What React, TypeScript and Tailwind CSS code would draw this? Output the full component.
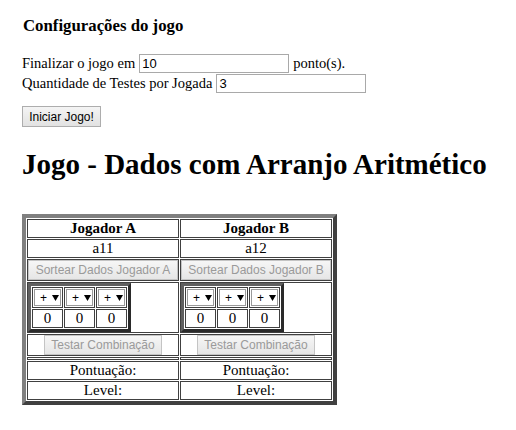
import React from "react";

const serif = "[font-family:'Liberation_Serif','Times_New_Roman',serif]";
const sans = "[font-family:'Liberation_Sans',Arial,sans-serif]";

const cell = "border border-[#404040] p-0 text-center align-middle text-[15px] leading-[17px]";

const Arrow = () => (
  <svg width="7" height="6" viewBox="0 0 7 6" className="ml-[5px]">
    <path d="M0 0 H7 L3.5 6 Z" fill="#000" />
  </svg>
);

const Dice = () => (
  <table className="border-separate border-spacing-[1px] border-[3px] border-t-[#606060] border-l-[#606060] border-r-[#2a2a2a] border-b-[#2a2a2a]">
    <tbody>
      <tr>
        {[0, 1, 2].map((i) => (
          <td key={i} className={`${cell} w-[31px] py-px`}>
            <div className={`${sans} mx-auto flex h-[17px] w-[27px] items-center border border-[#9a9a9a] bg-white pl-[5px] text-[12px] leading-none`}>
              +<Arrow />
            </div>
          </td>
        ))}
      </tr>
      <tr>
        {[0, 1, 2].map((i) => (
          <td key={i} className={`${cell} w-[31px]`}>0</td>
        ))}
      </tr>
    </tbody>
  </table>
);

const disabledBtn = `${sans} h-[20px] border border-[#c4c4c4] bg-gradient-to-b from-[#f6f6f6] to-[#e6e6e6] text-[12px] text-[#9a9a9a]`;

export default function App() {
  return (
    <div className={`${serif} min-h-[430px] bg-white px-[22px] pt-[17px] text-[14.5px] leading-[18px] text-black`}>
      <h3 className="pl-px text-[16.8px] font-bold">Configurações do jogo</h3>

      <div className="mt-[18px] flex h-[20px] items-center">
        <span>Finalizar o jogo em</span>
        <input
          readOnly
          value="10"
          className={`${sans} ml-[4px] h-[19px] w-[150px] border border-[#a9a9a9] px-[2px] text-[13px] outline-none`}
        />
        <span className="ml-[4px]">ponto(s).</span>
      </div>
      <div className="flex h-[20px] items-center">
        <span>Quantidade de Testes por Jogada</span>
        <input
          readOnly
          value="3"
          className={`${sans} ml-[4px] h-[19px] w-[150px] border border-[#a9a9a9] px-[2px] text-[13px] outline-none`}
        />
      </div>

      <button className={`${sans} mt-[13px] h-[21px] w-[79px] border border-[#adadad] bg-gradient-to-b from-[#f4f4f4] to-[#e2e2e2] text-[12px] text-black`}>
        Iniciar Jogo!
      </button>

      <h1 className="mt-[20px] whitespace-nowrap text-[29px] font-bold leading-[34px]">Jogo - Dados com Arranjo Aritmético</h1>

      <table className="mt-[33px] w-[315px] border-separate border-spacing-[1px] border-[4px] border-t-[#808080] border-l-[#808080] border-r-[#404040] border-b-[#404040]">
        <tbody>
          <tr>
            <td className={`${cell} w-1/2 font-bold`}>Jogador A</td>
            <td className={`${cell} w-1/2 font-bold`}>Jogador B</td>
          </tr>
          <tr>
            <td className={cell}>a11</td>
            <td className={cell}>a12</td>
          </tr>
          <tr>
            <td className={cell}>
              <button disabled className={`${disabledBtn} block w-full`}>Sortear Dados Jogador A</button>
            </td>
            <td className={cell}>
              <button disabled className={`${disabledBtn} block w-full`}>Sortear Dados Jogador B</button>
            </td>
          </tr>
          <tr>
            <td className={`${cell} text-left`}>
              <Dice />
            </td>
            <td className={`${cell} text-left`}>
              <Dice />
            </td>
          </tr>
          <tr>
            <td className={cell}>
              <button disabled className={`${disabledBtn} mx-auto block w-[118px]`}>Testar Combinação</button>
            </td>
            <td className={cell}>
              <button disabled className={`${disabledBtn} mx-auto block w-[118px]`}>Testar Combinação</button>
            </td>
          </tr>
          <tr>
            <td className="border border-[#404040] p-0"><div className="h-px" /></td>
            <td className="border border-[#404040] p-0"><div className="h-px" /></td>
          </tr>
          <tr>
            <td className={cell}>Pontuação:</td>
            <td className={cell}>Pontuação:</td>
          </tr>
          <tr>
            <td className={cell}>Level:</td>
            <td className={cell}>Level:</td>
          </tr>
        </tbody>
      </table>
    </div>
  );
}
